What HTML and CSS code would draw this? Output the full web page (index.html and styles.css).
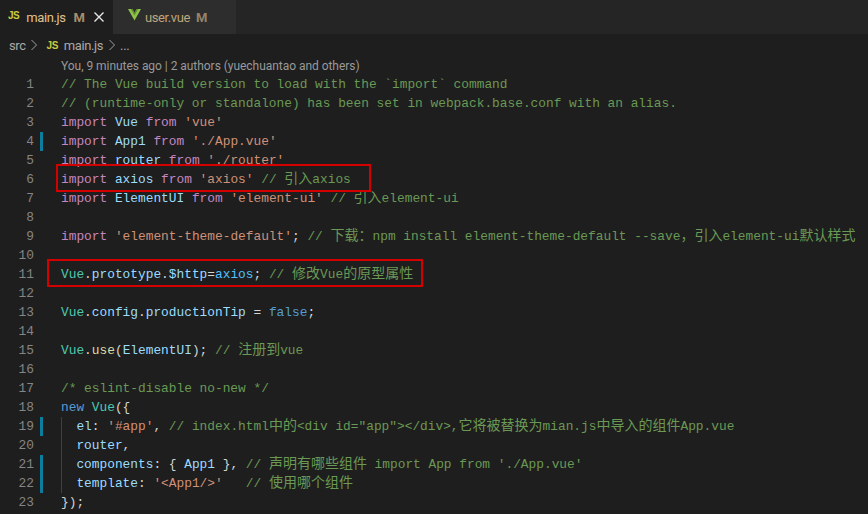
FILE: index.html
```html
<!DOCTYPE html>
<html lang="zh">
<head>
<meta charset="utf-8">
<title>main.js</title>
<link rel="stylesheet" href="styles.css">
</head>
<body>
<div class="editor">
  <div class="tabs">
    <div class="tab tab-active">
      <span class="js-icon">JS</span>
      <span class="tab-name">main.js</span>
      <span class="tab-mod">M</span>
      <svg class="tab-close" width="12" height="12" viewBox="0 0 12 12"><path d="M1.5 1.5L10.5 10.5M10.5 1.5L1.5 10.5" stroke="#e6e6e6" stroke-width="1.4" fill="none"/></svg>
    </div>
    <div class="tab tab-inactive">
      <svg class="vue-icon" width="13" height="12" viewBox="0 0 13 12"><path d="M0 0H4.2L6.5 4L8.8 0H13L6.5 11.5Z" fill="#8dc149"/><path d="M2.8 0H4.6L6.5 3.4L8.4 0H10.2L6.5 6.4Z" fill="#5e8a2e"/></svg>
      <span class="tab-name">user.vue</span>
      <span class="tab-mod">M</span>
    </div>
  </div>
  <div class="crumbs">
    <span>src</span>
    <svg class="chev" width="8" height="12" viewBox="0 0 8 12"><path d="M1.5 1L6.5 6L1.5 11" stroke="#a0a0a0" fill="none"/></svg>
    <span class="js-icon js-crumb">JS</span>
    <span>main.js</span>
    <svg class="chev chev-last" width="8" height="12" viewBox="0 0 8 12"><path d="M1.5 1L6.5 6L1.5 11" stroke="#a0a0a0" fill="none"/></svg>
    <span>...</span>
  </div>
  <div class="lens">You, 9 minutes ago | 2 authors (yuechuantao and others)</div>
  <div class="code">
    <div class="line"><span class="num">1</span><code><span class="c">// The Vue build version to load with the `import` command</span></code></div>
    <div class="line"><span class="num">2</span><code><span class="c">// (runtime-only or standalone) has been set in webpack.base.conf with an alias.</span></code></div>
    <div class="line"><span class="num">3</span><code><span class="k">import</span> <span class="v">Vue</span> <span class="k">from</span> <span class="s">'vue'</span></code></div>
    <div class="line mod"><span class="num">4</span><code><span class="k">import</span> <span class="v">App1</span> <span class="k">from</span> <span class="s">'./App.vue'</span></code></div>
    <div class="line"><span class="num">5</span><code><span class="k">import</span> <span class="v">router</span> <span class="k">from</span> <span class="s">'./router'</span></code></div>
    <div class="line"><span class="num">6</span><code><span class="k">import</span> <span class="v">axios</span> <span class="k">from</span> <span class="s">'axios'</span> <span class="c">// <span class="z">引入</span>axios</span></code></div>
    <div class="line"><span class="num">7</span><code><span class="k">import</span> <span class="v">ElementUI</span> <span class="k">from</span> <span class="s">'element-ui'</span> <span class="c">// <span class="z">引入</span>element-ui</span></code></div>
    <div class="line"><span class="num">8</span><code></code></div>
    <div class="line"><span class="num">9</span><code><span class="k">import</span> <span class="s">'element-theme-default'</span>; <span class="c">// <span class="z">下载：</span>npm install element-theme-default --save<span class="z">，引入</span>element-ui<span class="z">默认样式</span></span></code></div>
    <div class="line"><span class="num">10</span><code></code></div>
    <div class="line"><span class="num">11</span><code><span class="t">Vue</span>.<span class="v">prototype</span>.<span class="v">$http</span>=<span class="a">axios</span>; <span class="c">// <span class="z">修改</span>Vue<span class="z">的原型属性</span></span></code></div>
    <div class="line"><span class="num">12</span><code></code></div>
    <div class="line"><span class="num">13</span><code><span class="t">Vue</span>.<span class="v">config</span>.<span class="v">productionTip</span> = <span class="n">false</span>;</code></div>
    <div class="line"><span class="num">14</span><code></code></div>
    <div class="line"><span class="num">15</span><code><span class="t">Vue</span>.<span class="f">use</span>(<span class="v">ElementUI</span>); <span class="c">// <span class="z">注册到</span>vue</span></code></div>
    <div class="line"><span class="num">16</span><code></code></div>
    <div class="line"><span class="num">17</span><code><span class="c">/* eslint-disable no-new */</span></code></div>
    <div class="line"><span class="num">18</span><code><span class="n">new</span> <span class="t">Vue</span>({</code></div>
    <div class="line mod guide"><span class="num">19</span><code>  <span class="v">el</span>: <span class="s">'#app'</span>, <span class="c">// index.html<span class="z">中的</span>&lt;div id="app"&gt;&lt;/div&gt;,<span class="z">它将被替换为</span>mian.js<span class="z">中导入的组件</span>App.vue</span></code></div>
    <div class="line guide"><span class="num">20</span><code>  <span class="v">router</span>,</code></div>
    <div class="line mod guide"><span class="num">21</span><code>  <span class="v">components</span>: { <span class="v">App1</span> }, <span class="c">// <span class="z">声明有哪些组件</span> import App from './App.vue'</span></code></div>
    <div class="line mod guide"><span class="num">22</span><code>  <span class="v">template</span>: <span class="s">'&lt;App1/&gt;'</span>   <span class="c">// <span class="z">使用哪个组件</span></span></code></div>
    <div class="line"><span class="num">23</span><code>});</code></div>
    <div class="mark mark-axios"></div>
    <div class="mark mark-http"></div>
  </div>
</div>
</body>
</html>
```
FILE: styles.css
```css
* { box-sizing: border-box; }
html, body { margin: 0; padding: 0; }
body { width: 868px; height: 514px; overflow: hidden; background: #1e1e1e; font-family: Roboto, "Noto Sans CJK SC", sans-serif; }
.editor { display: flex; flex-direction: column; width: 868px; height: 514px; overflow: hidden; }
.tabs { display: flex; height: 34px; background: #252526; flex: none; }
.tab { display: flex; align-items: center; height: 34px; font-size: 13px; letter-spacing: -0.4px; }
.tab-active { width: 113px; background: #1e1e1e; padding-left: 8px; }
.tab-inactive { width: 123px; background: #2d2d2d; padding-left: 15px; }
.tab-name { color: #e2c08d; margin-left: 7px; }
.tab-inactive .tab-name { color: #bda57c; margin-left: 4px; }
.tab-mod { color: #a68f6c; font-weight: 700; margin-left: 8px; font-size: 13px; letter-spacing: 0; }
.tab-inactive .tab-mod { color: #94836a; margin-left: 6px; }
.tab-close { margin-left: 8px; }
.vue-icon { margin-bottom: 5px; }
.js-icon { color: #cbcb41; font-family: "Liberation Sans", sans-serif; font-weight: 700; font-size: 10px; letter-spacing: -0.5px; margin-bottom: 3px; }
.crumbs { display: flex; align-items: center; height: 22px; flex: none; padding-left: 9px; color: #a9a9a9; font-size: 13px; letter-spacing: -0.4px; }
.chev { margin: 0 5px 0 4px; }
.chev-last { margin: 0 4px 0 5px; }
.js-crumb { margin: 0 6px 0 4px; }
.lens { height: 19px; flex: none; padding-left: 61px; color: #999999; font-size: 12px; letter-spacing: -0.04px; line-height: 20px; }
.code { position: relative; flex: none; font-family: "Liberation Mono", "DejaVu Sans Mono", monospace; font-size: 12.83px; line-height: 19px; color: #d4d4d4; }
.line { position: relative; display: flex; height: 19px; }
.num { width: 34px; flex: none; text-align: right; color: #858585; }
code { margin-left: 27px; font: inherit; white-space: pre; }
.mod::before { content: ""; position: absolute; left: 40px; top: 0; width: 3px; height: 19px; background: #0c7d9d; }
.guide::after { content: ""; position: absolute; left: 61px; top: 0; width: 1px; height: 19px; background: #404040; }
.z { font-family: "Noto Sans CJK SC", sans-serif; font-size: 14px; line-height: 0; }
.k { color: #c586c0; }
.v { color: #9cdcfe; }
.t { color: #4ec9b0; }
.s { color: #ce9178; }
.c { color: #6a9955; }
.n { color: #569cd6; }
.a { color: #4fc1ff; }
.f { color: #dcdcaa; }
.mark { position: absolute; border: 2px solid #d40000; }
.mark-axios { left: 56px; top: 89px; width: 315px; height: 28px; }
.mark-http { left: 47px; top: 184px; width: 376px; height: 28px; }
```
